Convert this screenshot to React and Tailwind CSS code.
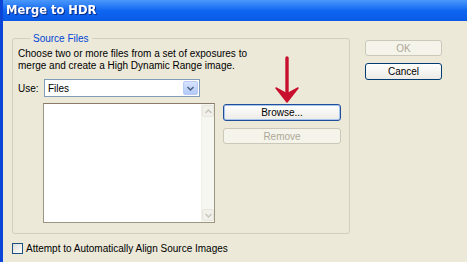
import React from "react";

function Chevron({ up, className }) {
  return (
    <svg width="7" height="5" viewBox="0 0 7 5" className={className}>
      {up ? (
        <path d="M0.5 4 L3.5 1 L6.5 4" fill="none" stroke="currentColor" strokeWidth="1.5" />
      ) : (
        <path d="M0.5 1 L3.5 4 L6.5 1" fill="none" stroke="currentColor" strokeWidth="1.5" />
      )}
    </svg>
  );
}

export default function App() {
  return (
    <div
      className="w-[467px] h-[262px] bg-[#ECE9D8] flex flex-col overflow-hidden relative text-[10px] text-black"
      style={{ fontFamily: '"Liberation Sans", Arial, sans-serif' }}
    >
      {/* Title bar */}
      <div className="h-[21px] shrink-0 flex items-center pl-[3px] bg-gradient-to-b from-[#4A98FB] via-[#0F66F0] to-[#0A5AE6] border-l-[3px] border-[#0A45D8]">
        <span className="text-white font-bold text-[11.5px] drop-shadow-[1px_1px_0_#0A2A88]" style={{ fontFamily: '"DejaVu Sans", "Liberation Sans", sans-serif' }}>
          Merge to HDR
        </span>
      </div>

      {/* Body */}
      <div className="flex-1 flex border-l-[3px] border-[#0A45D8]">
        <div className="flex flex-col pl-[9px] pt-[11px]">
          <fieldset className="w-[338px] h-[202px] border border-[#D0D0BF] rounded-[3px] pl-[5px] pr-[8px] flex flex-col">
            <legend className="ml-[12px] px-[3px] text-[#0046D5] text-[10px] leading-[13px]">Source Files</legend>
            <div className="leading-[12px] pt-[3px]">
              <div>Choose two or more files from a set of exposures to</div>
              <div>merge and create a High Dynamic Range image.</div>
            </div>
            <div className="flex items-center mt-[7px] h-[18px]">
              <span className="w-[26px]">Use:</span>
              <div className="w-[156px] h-[18px] bg-white border border-[#7F9DB9] flex items-center justify-between pl-[3px] pr-[1px]">
                <span>Files</span>
                <div className="w-[15px] h-[14px] rounded-[2px] bg-gradient-to-b from-[#D6E3FD] to-[#B3C9F7] border border-[#B8CCF5] flex items-center justify-center text-[#4D6185]">
                  <Chevron />
                </div>
              </div>
            </div>
            <div className="flex mt-[6px]">
              <div className="ml-[25px] w-[172px] h-[120px] bg-white border border-[#9B9681] border-t-[#8A7C6A] flex justify-end">
                <div className="w-[13px] h-full bg-[#F7F7F1] border-l border-[#F0EFE6] flex flex-col justify-between py-[1px]">
                  <div className="h-[12px] bg-[#F1F0EA] border border-[#E8E6DC] rounded-[2px] flex items-center justify-center text-[#C9C7BA]">
                    <Chevron up />
                  </div>
                  <div className="h-[12px] bg-[#F1F0EA] border border-[#E8E6DC] rounded-[2px] flex items-center justify-center text-[#C9C7BA]">
                    <Chevron />
                  </div>
                </div>
              </div>
              <div className="ml-[8px] flex flex-col gap-[7px] pt-[1px]">
                <div className="w-[118px] h-[17px] rounded-[3px] border border-[#1F4F98] bg-gradient-to-b from-[#FFFFFF] to-[#ECEBE6] shadow-[inset_0_0_0_1px_#A8C4EE] flex items-center justify-center">
                  Browse...
                </div>
                <div className="w-[118px] h-[16px] rounded-[3px] border border-[#CBC8B9] bg-[#F5F4EA] text-[#ACA899] flex items-center justify-center">
                  Remove
                </div>
              </div>
            </div>
          </fieldset>
          <div className="flex items-center mt-[7px]">
            <div className="w-[11px] h-[11px] border border-[#1C5180] bg-gradient-to-br from-[#DCDCD7] to-[#FFFFFF]"></div>
            <span className="ml-[3px]">Attempt to Automatically Align Source Images</span>
          </div>
        </div>

        <div className="flex flex-col pl-[15px] pt-[19px] gap-[7px]">
          <div className="w-[77px] h-[16px] rounded-[3px] border border-[#CBC8B9] bg-[#F5F4EA] text-[#ACA899] flex items-center justify-center">
            OK
          </div>
          <div className="w-[77px] h-[17px] rounded-[3px] border border-[#003C74] bg-gradient-to-b from-[#FFFFFF] to-[#ECEBE6] flex items-center justify-center">
            Cancel
          </div>
        </div>
      </div>

      {/* Red arrow overlay */}
      <svg className="absolute left-[274px] top-[56px]" width="26" height="48" viewBox="0 0 26 48">
        <path d="M13 2 L13 36" stroke="#C8102E" strokeWidth="3.4" strokeLinecap="round" />
        <path d="M2 32 L13 46 L24 32 L13 38 Z" fill="#C8102E" stroke="#C8102E" strokeWidth="1.5" strokeLinejoin="round" />
      </svg>
    </div>
  );
}
